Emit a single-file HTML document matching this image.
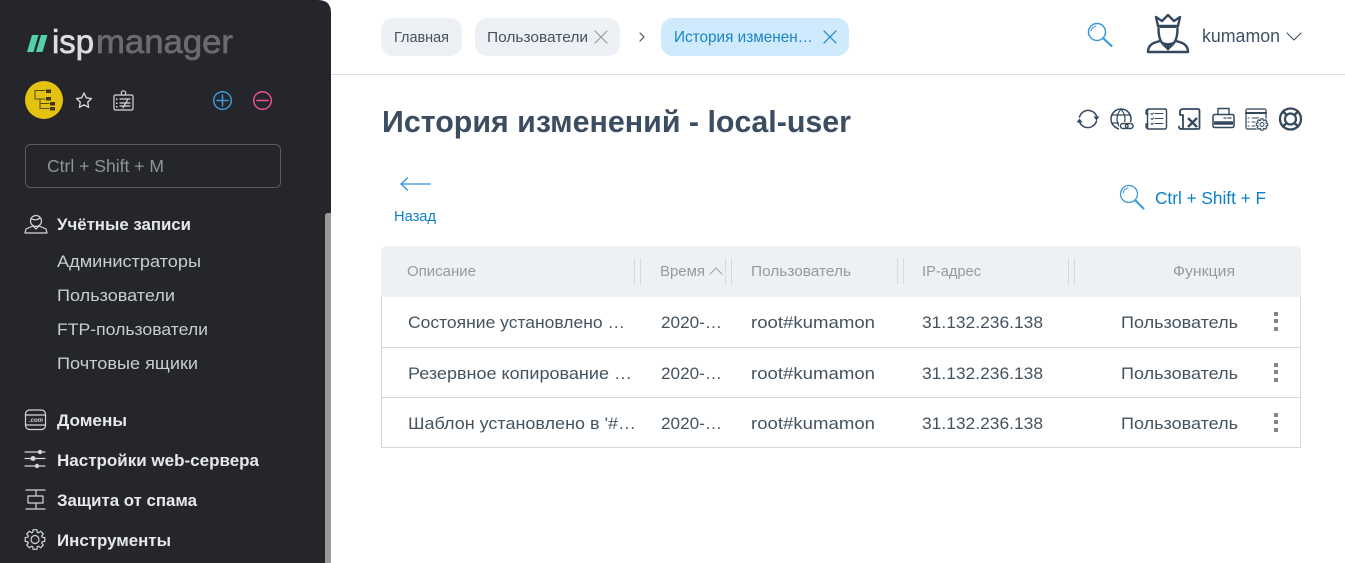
<!DOCTYPE html>
<html lang="ru"><head><meta charset="utf-8"><title>История изменений - local-user</title>
<style>
html,body{margin:0;padding:0;background:#fff;width:1345px;height:563px;overflow:hidden}
svg{display:block;position:absolute;left:0;top:0}
text{font-family:"Liberation Sans","DejaVu Sans",sans-serif;white-space:pre}
.s{fill:none;stroke-linecap:round;stroke-linejoin:round}
.nav{font-size:17px;fill:#c9ccd0}
.navb{font-size:17px;font-weight:700;fill:#e6e8ea}
.th{font-size:15px;fill:#999}
.td{font-size:17px;fill:#45535f}
.cr{font-size:15px;fill:#45535f}
</style></head><body>
<svg width="1345" height="563" viewBox="0 0 1345 563" xmlns="http://www.w3.org/2000/svg">
<!-- header line -->
<rect x="331" y="74" width="1014" height="1" fill="#dcdcdc"/>
<!-- sidebar -->
<path d="M0 0H318Q331 0 331 13V563H0Z" fill="#24262b"/>
<path d="M325 216q0-3 3-3h3v350h-6z" fill="#9a9a9a"/>
<!-- logo -->
<path d="M32 35h6.500l-5 17h-6.500zM41 35h6.500l-5 17h-6.500z" fill="#54d0aa"/>
<text x="52" y="53" font-size="33" fill="#dcdcdc" stroke="#dcdcdc" stroke-width=".7" textLength="42" lengthAdjust="spacingAndGlyphs">isp</text>
<text x="96" y="53" font-size="33" fill="#6a6b6e" stroke="#6a6b6e" stroke-width=".7" textLength="137" lengthAdjust="spacingAndGlyphs">manager</text>
<!-- quick icons -->
<circle cx="44" cy="100" r="19" fill="#e5c20f"/>
<g class="s" stroke="#5a4f10" stroke-width="1.100"><path d="M35 90.500v8.500h10M35 90.500h10M40 99v9.500h9M40 103.500h9"/></g>
<g fill="#3f3a14"><rect x="46" y="89.500" width="5" height="3.500"/><rect x="46" y="97" width="5" height="3.500"/><rect x="50" y="102" width="5" height="3.500"/><rect x="50" y="107" width="5" height="3.500"/></g>
<path class="s" stroke="#dcdcdc" stroke-width="1.300" d="M84 93l2.300 4.800 5.200.7-3.800 3.600.9 5.200-4.600-2.500-4.600 2.500.9-5.200-3.800-3.600 5.200-.7z"/>
<g class="s" stroke="#d8d8d8" stroke-width="1.200"><rect x="114" y="95" width="19" height="15" rx="1.500"/><circle cx="123.500" cy="93" r="2.200" fill="#24262b"/><path d="M120 99h10M120 103h10M120 106h10M123 108l5-9"/></g>
<g fill="#d8d8d8"><rect x="116" y="98.500" width="1.500" height="1.500"/><rect x="116" y="102.500" width="1.500" height="1.500"/><rect x="116" y="106" width="1.500" height="1.500"/></g>
<g class="s" stroke="#3b9ad6" stroke-width="1.500"><circle cx="222.500" cy="100.500" r="8.800"/><path d="M222.500 95v11M217 100.500h11"/></g>
<g class="s" stroke="#ea4f9b" stroke-width="1.500"><circle cx="262.500" cy="100.500" r="8.800"/><path d="M257 100.500h11"/></g>
<!-- search box -->
<rect x="25.500" y="144.500" width="255" height="43" rx="5" fill="none" stroke="#5a5c60"/>
<text x="47" y="172" font-size="17.500" fill="#8f9396" textLength="117" lengthAdjust="spacingAndGlyphs">Ctrl + Shift + M</text>
<!-- nav icons -->
<g class="s" stroke="#d4d6d8" stroke-width="1.200">
<circle cx="36" cy="221" r="5.500"/><path d="M32 219q4 2 8-1M33 226l-7 3-1 4h22l-1-4-7-3-3 3z"/>
<rect x="25.500" y="410" width="20" height="19.500" rx="4"/><path d="M26 415h19M26 425h19"/>
<path d="M25 452h20M25 458.500h20M25 466h20"/>
<path d="M26 490h19M26 509h19M36 490v6M36 503v6M28 496h15v7H28z"/>
<path transform="translate(35 539.500)" d="M-2.320-7.130L-1.910-9.820 1.910-9.820 2.320-7.130 3.400-6.680 5.590-8.300 8.300-5.590 6.680-3.400 7.130-2.320 9.820-1.910 9.820 1.910 7.130 2.320 6.680 3.400 8.300 5.590 5.590 8.300 3.400 6.680 2.320 7.130 1.910 9.820-1.910 9.820-2.320 7.130-3.400 6.680-5.590 8.300-8.300 5.590-6.680 3.400-7.130 2.320-9.820 1.910-9.820-1.910-7.130-2.320-6.680-3.400-8.300-5.590-5.590-8.300-3.400-6.680Z"/>
<circle cx="35" cy="539.500" r="4"/>
</g>
<text x="29" y="422" font-size="6.500" font-style="italic" font-weight="700" fill="#d4d6d8" textLength="14" lengthAdjust="spacingAndGlyphs">.com</text>
<g fill="#d4d6d8"><circle cx="40" cy="452" r="2.200"/><circle cx="33" cy="458.500" r="2.500"/><circle cx="37" cy="466" r="2.200"/></g>
<!-- nav text -->
<text class="navb" x="57" y="230" textLength="134" lengthAdjust="spacingAndGlyphs">Учётные записи</text>
<text class="nav" x="57" y="267" textLength="144" lengthAdjust="spacingAndGlyphs">Администраторы</text>
<text class="nav" x="57" y="301" textLength="118" lengthAdjust="spacingAndGlyphs">Пользователи</text>
<text class="nav" x="57" y="335" textLength="151" lengthAdjust="spacingAndGlyphs">FTP-пользователи</text>
<text class="nav" x="57" y="369" textLength="141" lengthAdjust="spacingAndGlyphs">Почтовые ящики</text>
<text class="navb" x="57" y="426" textLength="70" lengthAdjust="spacingAndGlyphs">Домены</text>
<text class="navb" x="57" y="466" textLength="202" lengthAdjust="spacingAndGlyphs">Настройки web-сервера</text>
<text class="navb" x="57" y="506" textLength="140" lengthAdjust="spacingAndGlyphs">Защита от спама</text>
<text class="navb" x="57" y="546" textLength="114" lengthAdjust="spacingAndGlyphs">Инструменты</text>
<!-- breadcrumbs -->
<rect x="381" y="18" width="81" height="38" rx="12" fill="#edf1f5"/>
<rect x="475" y="18" width="145" height="38" rx="12" fill="#edf1f5"/>
<rect x="661" y="18" width="188" height="38" rx="12" fill="#cfeafd"/>
<text class="cr" x="394" y="42" textLength="55" lengthAdjust="spacingAndGlyphs">Главная</text>
<text class="cr" x="487" y="42" font-size="16" textLength="101" lengthAdjust="spacingAndGlyphs">Пользователи</text>
<path class="s" stroke="#9a9a9a" stroke-width="1.200" d="M595 31l12 12M607 31l-12 12"/>
<path class="s" stroke="#45535f" stroke-width="1.200" d="M640 33l4 4-4 4"/>
<text x="674" y="42" font-size="16" fill="#1a84c9" textLength="139" lengthAdjust="spacingAndGlyphs">История изменен…</text>
<path class="s" stroke="#1a84c9" stroke-width="1.200" d="M824 31l12 12M836 31l-12 12"/>
<!-- top right -->
<g class="s" stroke="#3b9ad6"><circle cx="1097" cy="32" r="8.500" stroke-width="1.500"/><path d="M1103.500 38.500l8 7.500" stroke-width="2.200"/><path d="M1091 31q1-4 5-5" stroke-width="1"/></g>
<g class="s" stroke="#34495e" stroke-width="2.400">
<path d="M1156 17l2 9h20l2-9-6 4-6-6-6 6z"/>
<path d="M1158.500 28q0 11 4 15.500l5.500 5.500 5.500-5.500q4-4.500 4-15.500"/>
<path d="M1148 52q0-7 7-9.500l5-1.500M1188 52q0-7-7-9.500l-5-1.500M1148 52h40"/>
</g>
<path fill="#34495e" d="M1161 41q7 4 14 0l-1 3-6 6-6-6zM1160 25h16v3h-16z"/>
<text x="1202" y="42" font-size="18" fill="#3f5166" textLength="78" lengthAdjust="spacingAndGlyphs">kumamon</text>
<path class="s" stroke="#3f5166" stroke-width="1.100" d="M1287 33l7 7 7-7"/>
<!-- title -->
<text x="382" y="132" font-size="31" font-weight="700" fill="#3b4d61" textLength="469" lengthAdjust="spacingAndGlyphs">История изменений - local-user</text>
<!-- toolbar -->
<g class="s" stroke="#34495e" stroke-width="1.500">
<path d="M1079.500 117A9 9 0 0 1 1096.500 116M1096.500 121A9 9 0 0 1 1079.500 122"/>
<circle cx="1121" cy="119" r="10"/><path d="M1111.500 115h19M1111.500 123h19M1121 109q-8 10 0 20M1121 109q8 10 0 20" stroke-width="1.200"/>
<path d="M1149 109h16q1.500 0 1.500 2v16q0 2-1.500 2h-16q-1.500 0-1.500-2v-16q0-2 1.500-2zM1149 109q-3 0-3 3v2h2M1149 129q-3 0-3-3v-2h2" stroke-width="1.400"/>
<path d="M1155 113.500h8M1155 118.500h8M1155 123.500h8M1151 113.500l1 1 1.500-1.500M1151 118.500l1 1 1.500-1.500M1151 123.500l1 1 1.500-1.500" stroke-width="1"/>
<path d="M1183 109h15q1.500 0 1.500 2v17q0 1-1.500 1h-17M1183 109q-3 0-3 3v3h3v12q0 2-2 2-2 0-2-2.500" stroke-width="1.800"/>
<path d="M1188 118l9 9M1197 118l-9 9" stroke-width="2.300" stroke-linecap="butt"/>
<path d="M1218 114v-5.500h11v5.500" stroke-width="1.400"/>
<path d="M1215 114.500h17q2 0 2 2v9q0 2-2 2h-17q-2 0-2-2v-9q0-2 2-2z" stroke-width="1.500"/>
<path d="M1214 123h19" stroke-width="3.500" stroke-linecap="butt"/>
<path d="M1224 118h2M1228 118h3" stroke-width="1.300"/>
<rect x="1246" y="109" width="20" height="20" rx="1.500" stroke="#4a5d72" stroke-width="1.400"/>
<path d="M1246 113h20" stroke-width="2"/>
<path d="M1252 118h7M1252 122h4M1252 126h3M1248 118h1M1248 122h1M1248 126h1" stroke-width="1.100"/>
<circle cx="1290.500" cy="119" r="10.500" stroke-width="2.300"/><circle cx="1290.500" cy="119" r="5.500" stroke-width="2.200"/>
<path d="M1283 111.500l3.500 3.500M1298 111.500l-3.500 3.500M1283 126.500l3.500-3.500M1298 126.500l-3.500-3.500" stroke-width="2.400"/>
</g>
<path fill="#34495e" d="M1093.500 116.500h6l-3 4zM1076.500 122.500h6l-3-4z"/>
<rect x="1119" y="122" width="15.500" height="8.500" fill="#fff"/>
<g class="s" stroke="#34495e" stroke-width="1.500"><rect x="1120.500" y="123.500" width="7.500" height="5" rx="2.500"/><rect x="1125.500" y="123.500" width="7.500" height="5" rx="2.500"/></g>
<circle cx="1262" cy="124.500" r="7" fill="#fff"/>
<g class="s" stroke="#34495e" stroke-width="1"><path transform="translate(1262 124.500) scale(.58)" d="M-2.320-7.130L-1.910-9.820 1.910-9.820 2.320-7.130 3.400-6.680 5.590-8.300 8.300-5.590 6.680-3.400 7.130-2.320 9.820-1.910 9.820 1.910 7.130 2.320 6.680 3.400 8.300 5.590 5.590 8.300 3.400 6.680 2.320 7.130 1.910 9.820-1.910 9.820-2.320 7.130-3.400 6.680-5.590 8.300-8.300 5.590-6.680 3.400-7.130 2.320-9.820 1.910-9.820-1.910-7.130-2.320-6.680-3.400-8.300-5.590-5.590-8.300-3.400-6.680Z" stroke-width="1.900"/><circle cx="1262" cy="124.500" r="2"/></g>
<!-- back -->
<path class="s" stroke="#2f93d6" stroke-width="1.200" d="M401 184h29M407.500 178l-6.500 6 6.500 6"/>
<text x="394" y="221" font-size="15" fill="#0b7fca" textLength="42" lengthAdjust="spacingAndGlyphs">Назад</text>
<!-- search -->
<g class="s" stroke="#3b9ad6"><circle cx="1129" cy="194" r="8.500" stroke-width="1.300"/><path d="M1135.500 200.500l8 8" stroke-width="2"/><path d="M1123 193q1-4 5-5" stroke-width="1"/></g>
<text x="1155" y="204" font-size="17.500" fill="#0b7fca" textLength="111" lengthAdjust="spacingAndGlyphs">Ctrl + Shift + F</text>
<!-- table -->
<path d="M381 252q0-6 6-6h908q6 0 6 6v45H381z" fill="#edf1f5"/>
<path fill="none" stroke="#d8d8d8" d="M381.500 297v150.500h919V297M382 347.500h918M382 397.500h918"/>
<g fill="#d4d9de"><rect x="634" y="258" width="1" height="26"/><rect x="640" y="258" width="1" height="26"/><rect x="725" y="258" width="1" height="26"/><rect x="731" y="258" width="1" height="26"/><rect x="897" y="258" width="1" height="26"/><rect x="903" y="258" width="1" height="26"/><rect x="1068" y="258" width="1" height="26"/><rect x="1074" y="258" width="1" height="26"/></g>
<text class="th" x="407" y="276" textLength="69" lengthAdjust="spacingAndGlyphs">Описание</text>
<text class="th" x="660" y="276" textLength="45" lengthAdjust="spacingAndGlyphs">Время</text>
<path class="s" stroke="#a6a6a6" stroke-width="1.100" d="M710 274l6-6 6 6"/>
<text class="th" x="751" y="276" textLength="100" lengthAdjust="spacingAndGlyphs">Пользователь</text>
<text class="th" x="922" y="276" textLength="59" lengthAdjust="spacingAndGlyphs">IP-адрес</text>
<text class="th" x="1173" y="276" textLength="62" lengthAdjust="spacingAndGlyphs">Функция</text>

<text class="td" x="408" y="328" textLength="217" lengthAdjust="spacingAndGlyphs">Состояние установлено …</text>
<text class="td" x="661" y="328" textLength="61" lengthAdjust="spacingAndGlyphs">2020-…</text>
<text class="td" x="751" y="328" textLength="124" lengthAdjust="spacingAndGlyphs">root#kumamon</text>
<text class="td" x="922" y="328" textLength="121" lengthAdjust="spacingAndGlyphs">31.132.236.138</text>
<text class="td" x="1121" y="328" textLength="117" lengthAdjust="spacingAndGlyphs">Пользователь</text>

<text class="td" x="408" y="379" textLength="224" lengthAdjust="spacingAndGlyphs">Резервное копирование …</text>
<text class="td" x="661" y="379" textLength="61" lengthAdjust="spacingAndGlyphs">2020-…</text>
<text class="td" x="751" y="379" textLength="124" lengthAdjust="spacingAndGlyphs">root#kumamon</text>
<text class="td" x="922" y="379" textLength="121" lengthAdjust="spacingAndGlyphs">31.132.236.138</text>
<text class="td" x="1121" y="379" textLength="117" lengthAdjust="spacingAndGlyphs">Пользователь</text>

<text class="td" x="408" y="429" textLength="228" lengthAdjust="spacingAndGlyphs">Шаблон установлено в '#…</text>
<text class="td" x="661" y="429" textLength="61" lengthAdjust="spacingAndGlyphs">2020-…</text>
<text class="td" x="751" y="429" textLength="124" lengthAdjust="spacingAndGlyphs">root#kumamon</text>
<text class="td" x="922" y="429" textLength="121" lengthAdjust="spacingAndGlyphs">31.132.236.138</text>
<text class="td" x="1121" y="429" textLength="117" lengthAdjust="spacingAndGlyphs">Пользователь</text>

<g fill="#858585"><rect x="1274" y="312" width="4" height="4"/><rect x="1274" y="319" width="4" height="4"/><rect x="1274" y="327" width="4" height="4"/><rect x="1274" y="363" width="4" height="4"/><rect x="1274" y="370" width="4" height="4"/><rect x="1274" y="378" width="4" height="4"/><rect x="1274" y="413" width="4" height="4"/><rect x="1274" y="420" width="4" height="4"/><rect x="1274" y="428" width="4" height="4"/></g>
</svg>
</body></html>
